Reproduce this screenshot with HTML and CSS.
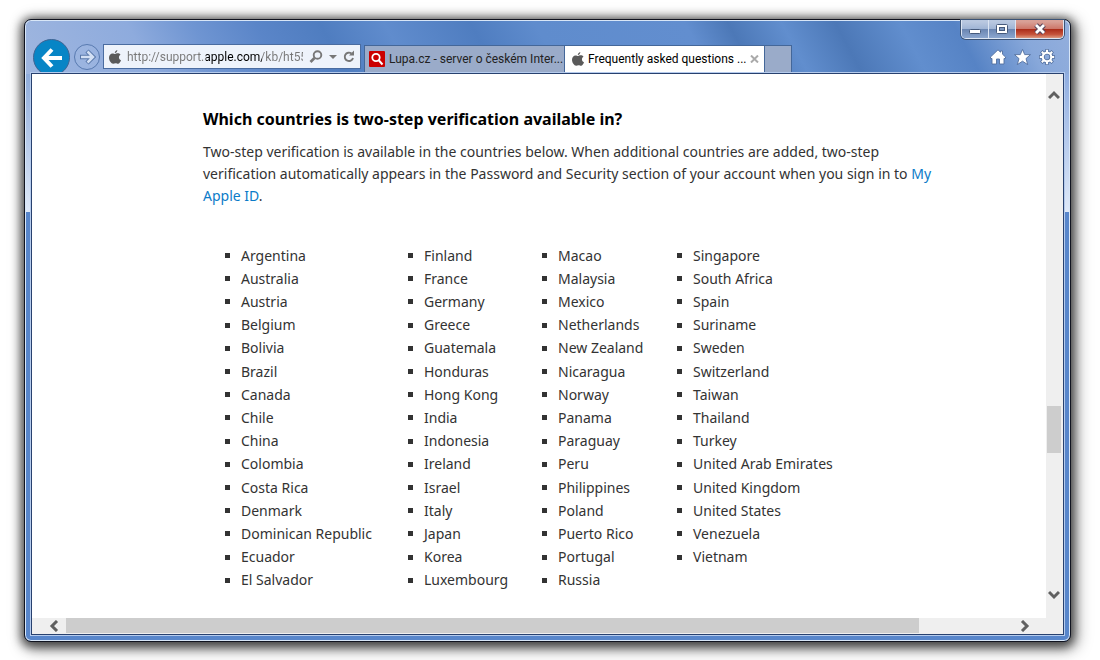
FILE: index.html
```html
<!DOCTYPE html>
<html lang="en">
<head>
<meta charset="utf-8">
<title>Frequently asked questions</title>
<link rel="stylesheet" href="styles.css">
</head>
<body>
<svg class="defs" aria-hidden="true">
  <symbol id="apple" viewBox="0 0 12 14"><path d="M8.300 0c.1 1.500-1 3-2.500 3.100C5.700 1.700 6.900.3 8.300 0zM6.100 4c.6 0 1.500-.7 2.700-.7 1 0 2 .5 2.700 1.400-2.300 1.400-1.900 4.600.5 5.500-.5 1.500-1.700 3.500-2.900 3.500-.9 0-1.500-.5-2.500-.5s-1.700.5-2.500.5C2.300 13.700 0 10.600 0 7.700 0 5 1.700 3.400 3.500 3.400c1.100 0 2 .6 2.600.6z"/></symbol>
</svg>
<div class="window">
  <header class="chrome">
    <div class="controls">
      <button class="control" aria-label="Minimize"><svg width="14" height="12" viewBox="0 0 14 12"><rect x="1.500" y="6.500" width="11" height="4" rx="1" fill="#fff" stroke="#465a7c"/></svg></button>
      <button class="control" aria-label="Maximize"><svg width="14" height="12" viewBox="0 0 14 12"><rect x="1.500" y="1.500" width="11" height="9" rx="1" fill="#fff" stroke="#465a7c"/><rect x="4.500" y="4.500" width="5" height="3" fill="#7d97c0" stroke="#465a7c"/></svg></button>
      <button class="control control-close" aria-label="Close"><svg width="14" height="12" viewBox="0 0 14 12"><path d="M3 2l8 8M11 2l-8 8" stroke="#57445a" stroke-width="5"/><path d="M3 2l8 8M11 2l-8 8" stroke="#fff" stroke-width="2.800"/></svg></button>
    </div>
    <div class="toolbar">
      <button class="back" aria-label="Back"><svg width="22" height="20" viewBox="0 0 22 20"><path d="M21 10H4M11 1.500L3 10l8 8.500" fill="none" stroke="#fff" stroke-width="4"/></svg></button>
      <button class="forward" aria-label="Forward"><svg width="17" height="16" viewBox="0 0 17 16"><path d="M1 8h12M8 2l6 6-6 6" fill="none" stroke="#5878aa" stroke-width="4.500"/><path d="M2 8h12M8.500 2.500L14 8l-5.500 5.500" fill="none" stroke="#d3e0f4" stroke-width="2.500"/></svg></button>
      <div class="address">
        <svg class="apple" width="12" height="14"><use href="#apple"/></svg>
        <input class="url" type="text" aria-label="Address" value="http://support.apple.com/kb/ht5577">
        <button class="tool" aria-label="Search"><svg width="14" height="14" viewBox="0 0 14 14" fill="none" stroke="#777"><circle cx="8.500" cy="5" r="3.800" stroke-width="1.900"/><path d="M5.500 8L1.500 12" stroke-width="2.600"/></svg></button>
        <button class="tool" aria-label="Show history"><svg width="8" height="4" viewBox="0 0 8 4"><path d="M0 0h8L4 4z" fill="#777"/></svg></button>
        <button class="tool" aria-label="Refresh"><svg width="12" height="13" viewBox="0 0 12 13"><path d="M8.500 3.500A4.200 4.200 0 1 0 10 8" fill="none" stroke="#777" stroke-width="1.900"/><path d="M6 5.500h5V.5z" fill="#777"/></svg></button>
      </div>
      <nav class="tabs" aria-label="Tabs">
        <button class="tab"><svg class="lupa" width="16" height="16" viewBox="0 0 16 16"><rect width="16" height="16" rx="1" fill="#cb0000"/><circle cx="7" cy="6.500" r="3.700" fill="none" stroke="#fff" stroke-width="1.800"/><path d="M9.500 9l4 4.500" stroke="#fff" stroke-width="2"/></svg><span>Lupa.cz - server o českém Inter...</span></button>
        <div class="tab tab-active"><svg class="apple" width="12" height="14"><use href="#apple"/></svg><span>Frequently asked questions ...</span><button class="tab-close" aria-label="Close tab"><svg width="9" height="8" viewBox="0 0 9 8"><path d="M1 .5l7 7M8 .5l-7 7" stroke="#aaa" stroke-width="2"/></svg></button></div>
        <button class="tab tab-new" aria-label="New tab"></button>
      </nav>
      <div class="actions">
        <button class="tool" aria-label="Home"><svg width="16" height="16" viewBox="0 0 16 16"><path d="M8 .8l2.500 2.400V2h2v3.200L15.500 8v1.500H14v5.500H9.500v-5h-3v5H2V9.500H.5V8z" fill="#fff" stroke="#526f9e" stroke-width=".9"/></svg></button>
        <button class="tool" aria-label="Favorites"><svg width="17" height="16" viewBox="0 0 17 16"><path d="M8.500.4l2.200 5.200H16.500l-4.500 4 1.700 6-5.200-3.400-5.200 3.400 1.700-6L.5 5.600h5.800z" fill="#fff" stroke="#526f9e" stroke-width=".9"/></svg></button>
        <button class="tool" aria-label="Tools"><svg width="16" height="16" viewBox="0 0 16 16" fill="none"><g stroke="#526f9e"><circle cx="8" cy="8" r="4.300" stroke-width="3.800"/><path d="M8 0v4M8 12v4M0 8h4M12 8h4M2.300 2.300L5 5M11 11l2.700 2.700M13.700 2.300L11 5M5 11l-2.700 2.700" stroke-width="3.400"/></g><g stroke="#fff"><circle cx="8" cy="8" r="4.300" stroke-width="2.200"/><path d="M8 .8v3M8 12.200v3M.8 8h3M12.200 8h3M2.800 2.800L5 5M11 11l2.200 2.200M13.200 2.800L11 5M5 11l-2.200 2.200" stroke-width="2"/></g></svg></button>
      </div>
    </div>
  </header>
  <div class="view">
    <main class="page">
      <h1>Which countries is two-step verification available in?</h1>
      <p>Two-step verification is available in the countries below. When additional countries are added, two-step verification automatically appears in the Password and Security section of your account when you sign in to <a href="#">My Apple ID</a>.</p>
      <div class="countries">
        <ul><li>Argentina</li><li>Australia</li><li>Austria</li><li>Belgium</li><li>Bolivia</li><li>Brazil</li><li>Canada</li><li>Chile</li><li>China</li><li>Colombia</li><li>Costa Rica</li><li>Denmark</li><li>Dominican Republic</li><li>Ecuador</li><li>El Salvador</li></ul>
        <ul><li>Finland</li><li>France</li><li>Germany</li><li>Greece</li><li>Guatemala</li><li>Honduras</li><li>Hong Kong</li><li>India</li><li>Indonesia</li><li>Ireland</li><li>Israel</li><li>Italy</li><li>Japan</li><li>Korea</li><li>Luxembourg</li></ul>
        <ul><li>Macao</li><li>Malaysia</li><li>Mexico</li><li>Netherlands</li><li>New Zealand</li><li>Nicaragua</li><li>Norway</li><li>Panama</li><li>Paraguay</li><li>Peru</li><li>Philippines</li><li>Poland</li><li>Puerto Rico</li><li>Portugal</li><li>Russia</li></ul>
        <ul><li>Singapore</li><li>South Africa</li><li>Spain</li><li>Suriname</li><li>Sweden</li><li>Switzerland</li><li>Taiwan</li><li>Thailand</li><li>Turkey</li><li>United Arab Emirates</li><li>United Kingdom</li><li>United States</li><li>Venezuela</li><li>Vietnam</li></ul>
      </div>
    </main>
    <div class="scroll scroll-y">
      <button aria-label="Scroll up"><svg width="12" height="10" viewBox="0 0 12 10"><path d="M1 8l5-5 5 5" fill="none" stroke="#606060" stroke-width="3"/></svg></button>
      <div class="track"><div class="thumb"></div></div>
      <button aria-label="Scroll down"><svg width="12" height="10" viewBox="0 0 12 10"><path d="M1 2l5 5 5-5" fill="none" stroke="#606060" stroke-width="3"/></svg></button>
    </div>
    <div class="scroll scroll-x">
      <button aria-label="Scroll left"><svg width="10" height="12" viewBox="0 0 10 12"><path d="M8 1L3 6l5 5" fill="none" stroke="#606060" stroke-width="3"/></svg></button>
      <div class="track"><div class="thumb"></div></div>
      <button aria-label="Scroll right"><svg width="10" height="12" viewBox="0 0 10 12"><path d="M2 1l5 5-5 5" fill="none" stroke="#606060" stroke-width="3"/></svg></button>
    </div>
  </div>
</div>
</body>
</html>
```
FILE: styles.css
```css
* { box-sizing: border-box; }

body {
  margin: 0;
  min-height: 100vh;
  padding: 19px 29px 18px 24px;
  display: flex;
  background: #fff;
  color: #333;
  font: 14px/22px "Noto Sans", sans-serif;
}

button {
  margin: 0;
  padding: 0;
  border: 0;
  background: none;
  font: inherit;
  color: inherit;
  display: flex;
  align-items: center;
  justify-content: center;
}

svg { display: block; flex: none; }
.defs { position: absolute; width: 0; height: 0; }
.apple { fill: #5a5a5a; }

.window {
  flex: 1;
  min-width: 0;
  display: flex;
  flex-direction: column;
  padding: 0 6px 6px;
  border: 1px solid #10131f;
  border-radius: 7px;
  background:
    linear-gradient(#9db6dfcc, #dfe9f8) left 0 top 54px / 7px 138px no-repeat,
    linear-gradient(#8fade0, #dfe9f8) right 0 top 54px / 7px 138px no-repeat,
    linear-gradient(62deg, #9fb6df 0, #8eabdd 12%, #6f95d2 18%, #5a85c8 24%, #4f7dc0 30%, #608ccd 36%, #4f7dc0 44%, #5f8ccd 50%, #628ecf 64%, #4c78b7 68%, #618ece 73%, #4c78b7 78%, #618ece 84%, #5683c5 89%, #88a8da 95%, #94afdd 100%) top / 100% 54px no-repeat,
    #5886cb;
  box-shadow: inset 0 0 0 1px #d8e6f7, 0 2px 10px 3px #0009, 3px 4px 16px 3px #0006;
}

.chrome { display: flex; flex-direction: column; }

.controls {
  align-self: flex-end;
  display: flex;
  height: 19px;
  border: 1px solid #dce5f3;
  border-top: 0;
  border-radius: 0 0 5px 5px;
  overflow: hidden;
  box-shadow: 0 0 0 1px #3c5375;
}

.control {
  width: 27px;
  border-right: 1px solid #dce5f3;
  background: linear-gradient(#b9c8e0 0 10%, #9fb4d5 50%, #6984b0 50%, #8ba6cf);
}

.control-close {
  width: 47px;
  border: 0;
  background: linear-gradient(#d9a096 0 10%, #cc7568 50%, #a92a18 50%, #c5533b 80%, #dc9a80);
}

.toolbar { display: flex; height: 34px; align-items: flex-end; }

.back {
  width: 37px;
  height: 37px;
  margin: 0 0 -3px 2px;
  border: 1px solid #406493;
  border-radius: 50%;
  background: #0785c6;
}

.forward {
  width: 26px;
  height: 26px;
  margin: 0 3px 3px 4px;
  border: 1px solid #587ab0;
  border-radius: 13px;
  background: #a6bee555;
}

.address {
  width: 258px;
  height: 25px;
  margin: 0 3px 4px 0;
  padding: 0 5px;
  display: flex;
  align-items: center;
  gap: 6px;
  border: 1px solid #4a6ca0;
  background: #eef3fb;
}

.url {
  flex: 1;
  min-width: 0;
  padding: 0;
  border: 0;
  outline: 0;
  font: 12px/20px Roboto, sans-serif;
  color: transparent;
  background: linear-gradient(90deg, #777 79px, #000 79px 135px, #777 135px);
  background-clip: text;
  -webkit-background-clip: text;
}

.tabs { display: flex; height: 28px; }

.tab {
  width: 201px;
  height: 27px;
  padding: 0 1px 0 4px;
  display: flex;
  align-items: center;
  justify-content: flex-start;
  gap: 4px;
  border: 1px solid #446799;
  border-bottom: 0;
  background: #9aabc9;
  color: #222;
  font: 12px/20px Roboto, sans-serif;
  white-space: nowrap;
}

.tab-active { margin-left: -1px; padding: 0 5px 0 7px; background: #fff; color: #000; }
.tab span { flex: 1; text-align: left; }
.tab-new { width: 28px; margin-left: -1px; }

.actions { display: flex; gap: 8px; margin-left: auto; padding: 0 9px 8px 0; }

.view {
  position: relative;
  flex: 1;
  display: grid;
  grid-template: 1fr 16px / 1fr 17px;
  border: 1px solid #28416f;
  background: #efefef;
  outline: 1px solid #b5cbed;
}

.page { padding: 34px 96px 22px 171px; background: #fff; }
h1 { margin: 0 0 11px; font-size: 16px; line-height: 22px; color: #000; }
p { margin: 0; }
a { color: #0b7bc8; text-decoration: none; }

.countries {
  display: grid;
  grid-template-columns: 183px 134px 135px 1fr;
  margin-top: 37px;
  padding-left: 22px;
}

ul {
  height: 348px;
  margin: 0;
  padding: 0;
  display: grid;
  grid-template-rows: repeat(15, 1fr);
  list-style: none;
}

li { display: flex; align-items: center; gap: 11px; white-space: nowrap; }
li::before { content: ""; width: 5px; height: 5px; background: #333; }

.scroll { display: flex; }
.scroll-y { flex-direction: column; padding: 15px 2px 17px 0; }
.scroll-y button { height: 12px; }
.scroll-x { padding: 0 16px 0 16px; }
.scroll-x button { width: 11px; }
.track { flex: 1; display: flex; }
.scroll-y .track { flex-direction: column; padding: 305px 0 0 1px; }
.scroll-x .track { padding: 0 100px 0 7px; }
.thumb { background: #cdcdcd; }
.scroll-y .thumb { height: 47px; }
.scroll-x .thumb { flex: 1; height: 15px; }
```
